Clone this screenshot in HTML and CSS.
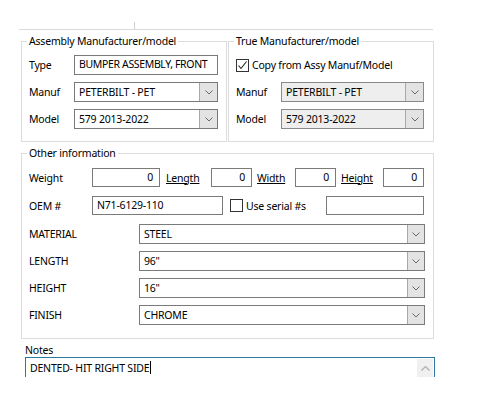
FILE: index.html
```html
<!DOCTYPE html>
<html lang="en">
<head>
  <meta charset="UTF-8">
  <title>Part Details</title>
  <link rel="stylesheet" href="styles.css">
</head>
<body>
  <div class="form">
    <div class="top-rule"><span class="tick"></span></div>

    <div class="groups">
      <fieldset class="group group-assy">
        <legend>Assembly Manufacturer/model</legend>
        <div class="row">
          <span class="lbl">Type</span>
          <div class="field w-main caps">BUMPER ASSEMBLY, FRONT</div>
        </div>
        <div class="row">
          <span class="lbl">Manuf</span>
          <div class="combo w-main">
            <span class="combo-text">PETERBILT - PET</span>
            <span class="combo-btn"><svg width="8" height="5" viewBox="0 0 8 5"><polyline points="0.5,0.5 4,4 7.5,0.5" fill="none" stroke="#6a6a6a" stroke-width="1"/></svg></span>
          </div>
        </div>
        <div class="row">
          <span class="lbl">Model</span>
          <div class="combo w-main">
            <span class="combo-text">579 2013-2022</span>
            <span class="combo-btn"><svg width="8" height="5" viewBox="0 0 8 5"><polyline points="0.5,0.5 4,4 7.5,0.5" fill="none" stroke="#6a6a6a" stroke-width="1"/></svg></span>
          </div>
        </div>
      </fieldset>

      <fieldset class="group group-true">
        <legend>True Manufacturer/model</legend>
        <div class="row">
          <span class="check"><svg width="11" height="11" viewBox="0 0 11 11"><polyline points="1.5,5.5 4,8.5 9.5,1.5" fill="none" stroke="#222" stroke-width="1.1"/></svg></span>
          <span class="check-text">Copy from Assy Manuf/Model</span>
        </div>
        <div class="row">
          <span class="lbl">Manuf</span>
          <div class="combo w-true disabled">
            <span class="combo-text">PETERBILT - PET</span>
            <span class="combo-btn"><svg width="8" height="5" viewBox="0 0 8 5"><polyline points="0.5,0.5 4,4 7.5,0.5" fill="none" stroke="#6a6a6a" stroke-width="1"/></svg></span>
          </div>
        </div>
        <div class="row">
          <span class="lbl">Model</span>
          <div class="combo w-true disabled">
            <span class="combo-text">579 2013-2022</span>
            <span class="combo-btn"><svg width="8" height="5" viewBox="0 0 8 5"><polyline points="0.5,0.5 4,4 7.5,0.5" fill="none" stroke="#6a6a6a" stroke-width="1"/></svg></span>
          </div>
        </div>
      </fieldset>
    </div>

    <fieldset class="group group-other">
      <legend>Other information</legend>
      <div class="row small">
        <span class="lbl lbl-wide">Weight</span>
        <div class="field num w-weight">0</div>
        <span class="link l-length">Length</span>
        <div class="field num w-dim">0</div>
        <span class="link l-width">Width</span>
        <div class="field num w-dim">0</div>
        <span class="link l-height">Height</span>
        <div class="field num w-dim">0</div>
      </div>
      <div class="row small">
        <span class="lbl lbl-wide">OEM #</span>
        <div class="field w-oem">N71-6129-110</div>
        <span class="check unchecked"></span>
        <span class="check-text serial">Use serial #s</span>
        <div class="field w-serial"></div>
      </div>
      <div class="row">
        <span class="lbl lbl-attr">MATERIAL</span>
        <div class="combo w-attr">
          <span class="combo-text">STEEL</span>
          <span class="combo-btn"><svg width="8" height="5" viewBox="0 0 8 5"><polyline points="0.5,0.5 4,4 7.5,0.5" fill="none" stroke="#6a6a6a" stroke-width="1"/></svg></span>
        </div>
      </div>
      <div class="row">
        <span class="lbl lbl-attr">LENGTH</span>
        <div class="combo w-attr">
          <span class="combo-text">96"</span>
          <span class="combo-btn"><svg width="8" height="5" viewBox="0 0 8 5"><polyline points="0.5,0.5 4,4 7.5,0.5" fill="none" stroke="#6a6a6a" stroke-width="1"/></svg></span>
        </div>
      </div>
      <div class="row">
        <span class="lbl lbl-attr">HEIGHT</span>
        <div class="combo w-attr">
          <span class="combo-text">16"</span>
          <span class="combo-btn"><svg width="8" height="5" viewBox="0 0 8 5"><polyline points="0.5,0.5 4,4 7.5,0.5" fill="none" stroke="#6a6a6a" stroke-width="1"/></svg></span>
        </div>
      </div>
      <div class="row">
        <span class="lbl lbl-attr">FINISH</span>
        <div class="combo w-attr">
          <span class="combo-text">CHROME</span>
          <span class="combo-btn"><svg width="8" height="5" viewBox="0 0 8 5"><polyline points="0.5,0.5 4,4 7.5,0.5" fill="none" stroke="#6a6a6a" stroke-width="1"/></svg></span>
        </div>
      </div>
    </fieldset>

    <div class="notes-label">Notes</div>
    <div class="notes">
      <span class="notes-text">DENTED- HIT RIGHT SIDE</span><span class="caret"></span>
      <span class="scroll-btn"><svg width="9" height="5" viewBox="0 0 9 5"><polyline points="0.5,4.5 4.5,0.5 8.5,4.5" fill="none" stroke="#b0b0b0" stroke-width="1.2"/></svg></span>
    </div>
  </div>
</body>
</html>
```

FILE: styles.css
```css
body {
  margin: 0;
  background-color: #fff;
  font-family: "Noto Sans", "Open Sans", sans-serif;
  font-size: 10.5px;
  letter-spacing: -0.2px;
  color: #000;
}

.form {
  width: 500px;
  height: 400px;
  overflow: hidden;
}

.top-rule {
  margin: 22px 0 0 19px;
  width: 414px;
  height: 7px;
  border-bottom: 1px solid #dadada;
}

.top-rule .tick {
  display: block;
  margin-left: 115px;
  width: 1px;
  height: 7px;
  background-color: #d0d0d0;
}

.groups {
  display: flex;
  gap: 1px;
  margin: 3px 0 0 21px;
}

.group {
  margin: 0;
  padding: 6px 8px 12px 7px;
  border: 1px solid #dcdcdc;
  min-width: 0;
  display: flex;
  flex-direction: column;
  gap: 7px;
}

.group legend {
  margin-left: -2px;
  padding: 0 2px;
  line-height: 16px;
}

.group-assy {
  width: 206px;
  box-sizing: border-box;
}

.group-true {
  width: 206px;
  box-sizing: border-box;
}

.row {
  display: flex;
  align-items: center;
  height: 20px;
}

.row.small {
  height: 19px;
  margin-bottom: 2px;
}

.lbl {
  width: 45px;
  flex: none;
}

.lbl-wide {
  width: 63px;
}

.lbl-attr {
  width: 110px;
}

.field,
.combo {
  box-sizing: border-box;
  height: 100%;
  border: 1px solid #7a7a7a;
  background-color: #fff;
  flex: none;
  white-space: nowrap;
  overflow: hidden;
}

.field {
  padding: 0 4px;
  line-height: 17px;
}

.field.caps {
  letter-spacing: -0.35px;
}

.field.num {
  text-align: right;
  padding-right: 6px;
}

.combo {
  display: flex;
}

.combo-text {
  flex: 1;
  padding-left: 4px;
  line-height: 18px;
}

.combo-btn {
  width: 17px;
  background-color: #e3e3e3;
  border-left: 1px solid #a8a8a8;
  display: flex;
  align-items: center;
  justify-content: center;
}

.combo.disabled {
  background-color: #eeeeee;
  border-color: #8a8a8a;
}

.w-main {
  width: 144px;
}

.w-true {
  width: 143px;
}

.check {
  box-sizing: border-box;
  width: 13px;
  height: 13px;
  border: 1px solid #333;
  background-color: #fff;
  display: flex;
  align-items: center;
  justify-content: center;
  flex: none;
}

.check-text {
  margin-left: 3px;
}

.group-other {
  width: 413px;
  box-sizing: border-box;
  margin: 3px 0 0 21px;
  padding: 7px 8px 13px 7px;
}

.w-weight {
  width: 68px;
}

.w-dim {
  width: 41px;
}

.link {
  text-decoration: underline;
  flex: none;
}

.l-length {
  margin-left: 6px;
  width: 45px;
}

.l-width {
  margin-left: 5px;
  width: 38px;
}

.l-height {
  margin-left: 5px;
  width: 42px;
}

.w-oem {
  width: 131px;
}

.check.unchecked {
  margin-left: 7px;
}

.serial {
  width: 80px;
}

.w-serial {
  width: 98px;
}

.w-attr {
  width: 286px;
}

.w-attr .combo-btn {
  width: 16px;
}

.notes-label {
  margin: 4px 0 0 25px;
  line-height: 14px;
}

.notes {
  box-sizing: border-box;
  width: 410px;
  height: 20px;
  margin-left: 25px;
  border: 1px solid #2a7ba0;
  border-bottom: none;
  display: flex;
  align-items: center;
  padding-left: 4px;
}

.caret {
  width: 1px;
  height: 13px;
  background-color: #000;
  margin-left: 1px;
}

.scroll-btn {
  margin-left: auto;
  align-self: flex-end;
  width: 16px;
  height: 18px;
  margin-right: 1px;
  background-color: #f0f0f0;
  display: flex;
  align-items: center;
  justify-content: center;
}
```
